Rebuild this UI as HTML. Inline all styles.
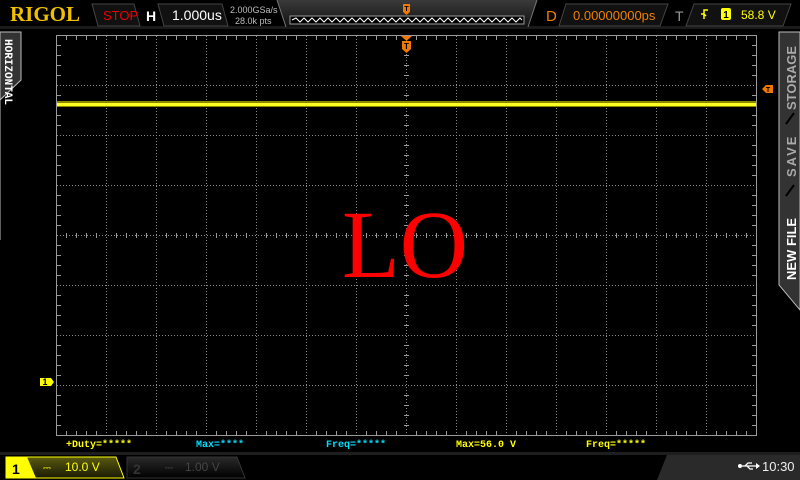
<!DOCTYPE html>
<html><head><meta charset="utf-8"><style>
body{margin:0;width:800px;height:480px;background:#000;overflow:hidden;font-family:"Liberation Sans",sans-serif}
svg{position:absolute;left:0;top:0}
</style></head><body>
<svg width="800" height="480" viewBox="0 0 800 480" xmlns="http://www.w3.org/2000/svg" font-family="Liberation Sans, sans-serif">
<defs>
<linearGradient id="tg" x1="0" y1="0" x2="0" y2="1"><stop offset="0" stop-color="#3a3a3a"/><stop offset="1" stop-color="#111"/></linearGradient>
<linearGradient id="bg" x1="0" y1="0" x2="0" y2="1"><stop offset="0" stop-color="#2a2a2a"/><stop offset="1" stop-color="#000"/></linearGradient>
<linearGradient id="c1" x1="0" y1="0" x2="0" y2="1"><stop offset="0" stop-color="#5a5a10"/><stop offset="1" stop-color="#1a1a05"/></linearGradient>
</defs>
<rect x="0" y="0" width="800" height="28" fill="#000"/>
<rect x="0" y="26" width="800" height="3" fill="#1a1a1a"/>
<text x="10" y="21" font-family="Liberation Serif, serif" font-weight="bold" font-size="21" fill="#f0c000">RIGOL</text>
<polygon points="92,4 134,4 140,26 98,26" fill="#111" stroke="#444"/>
<text x="103" y="20" font-size="13" fill="#e00">STOP</text>
<text x="146" y="21" font-size="14" font-weight="bold" fill="#fff">H</text>
<polygon points="158,4 222,4 228,26 164,26" fill="#111" stroke="#444"/>
<text x="172" y="20" font-size="14" fill="#fff">1.000us</text>
<text x="230" y="13" font-size="9" fill="#bbb">2.000GSa/s</text>
<text x="235" y="24" font-size="9" fill="#bbb">28.0k pts</text>
<polygon points="277,0 537,0 528,27 286,27" fill="url(#tg)"/>
<line x1="277" y1="0" x2="286" y2="27" stroke="#777"/>
<line x1="537" y1="0" x2="528" y2="27" stroke="#777"/>
<rect x="290" y="16" width="234" height="8" fill="#000" stroke="#999"/>
<polyline points="292,20 296,18 300,22 304,18 308,22 312,18 316,22 320,18 324,22 328,18 332,22 336,18 340,22 344,18 348,22 352,18 356,22 360,18 364,22 368,18 372,22 376,18 380,22 384,18 388,22 392,18 396,22 400,18 404,22 408,18 412,22 416,18 420,22 424,18 428,22 432,18 436,22 440,18 444,22 448,18 452,22 456,18 460,22 464,18 468,22 472,18 476,22 480,18 484,22 488,18 492,22 496,18 500,22 504,18 508,22 512,18 516,22 520,18 522,20" fill="none" stroke="#fff" stroke-width="1"/>
<rect x="403" y="4" width="7" height="8" fill="#f07800"/><polygon points="403,12 410,12 406.5,15" fill="#f07800"/>
<text x="406.5" y="11" font-size="7" font-weight="bold" text-anchor="middle" fill="#000">T</text>
<text x="546" y="21" font-size="15" fill="#f08000">D</text>
<polygon points="566,4 668,4 660,26 559,26" fill="#111" stroke="#444"/>
<text x="573" y="20" font-size="13" fill="#f08000">0.00000000ps</text>
<text x="675" y="21" font-size="14" fill="#999">T</text>
<polygon points="694,4 791,4 783,26 686,26" fill="#111" stroke="#444"/>
<path d="M708,10 h-4 v9 M704,14 h-3 M706,16 l-2,-2" stroke="#ff0" stroke-width="1.5" fill="none"/>
<rect x="721" y="8" width="10" height="12" rx="2" fill="#ff0"/>
<text x="726" y="18" font-size="10" font-weight="bold" text-anchor="middle" fill="#000">1</text>
<text x="741" y="19" font-size="12" fill="#ff0">58.8 V</text>

<polygon points="0,32 21,32 21,80 0,100" fill="#333" stroke="#bbb"/>
<line x1="0" y1="100" x2="0" y2="240" stroke="#bbb"/>
<text transform="translate(5,39) rotate(90)" font-size="11" font-weight="bold" fill="#fff" font-family="Liberation Mono, monospace">HORIZONTAL</text>
<polygon points="779,32 800,32 800,310 779,285" fill="#333" stroke="#bbb"/>
<text transform="translate(796,280) rotate(-90)" font-size="13" font-weight="bold" fill="#fff">NEW FILE</text>
<line x1="786" y1="196" x2="794" y2="185" stroke="#000" stroke-width="2"/>
<text transform="translate(796,177) rotate(-90)" font-size="13" font-weight="bold" fill="#aaa" letter-spacing="2">SAVE</text>
<line x1="786" y1="124" x2="794" y2="113" stroke="#000" stroke-width="2"/>
<text transform="translate(796,110) rotate(-90)" font-size="13" font-weight="bold" fill="#aaa">STORAGE</text>

<g stroke="#8a8a8a" stroke-width="1" stroke-dasharray="1,2">
<path d="M106.5,36V435M156.5,36V435M206.5,36V435M256.5,36V435M306.5,36V435M356.5,36V435M456.5,36V435M506.5,36V435M556.5,36V435M606.5,36V435M656.5,36V435M706.5,36V435"/>
<path d="M57,85.5H756M57,135.5H756M57,185.5H756M57,285.5H756M57,335.5H756M57,385.5H756"/>
<path d="M57,235.5H756M406.5,36V435"/>
</g>
<rect x="56.5" y="35.5" width="700" height="400" fill="none" stroke="#999"/>
<g stroke="#999">
<path d="M66.5,36v4M76.5,36v4M86.5,36v4M96.5,36v4M116.5,36v4M126.5,36v4M136.5,36v4M146.5,36v4M166.5,36v4M176.5,36v4M186.5,36v4M196.5,36v4M216.5,36v4M226.5,36v4M236.5,36v4M246.5,36v4M266.5,36v4M276.5,36v4M286.5,36v4M296.5,36v4M316.5,36v4M326.5,36v4M336.5,36v4M346.5,36v4M366.5,36v4M376.5,36v4M386.5,36v4M396.5,36v4M416.5,36v4M426.5,36v4M436.5,36v4M446.5,36v4M466.5,36v4M476.5,36v4M486.5,36v4M496.5,36v4M516.5,36v4M526.5,36v4M536.5,36v4M546.5,36v4M566.5,36v4M576.5,36v4M586.5,36v4M596.5,36v4M616.5,36v4M626.5,36v4M636.5,36v4M646.5,36v4M666.5,36v4M676.5,36v4M686.5,36v4M696.5,36v4M716.5,36v4M726.5,36v4M736.5,36v4M746.5,36v4"/>
<path d="M66.5,435v-4M76.5,435v-4M86.5,435v-4M96.5,435v-4M116.5,435v-4M126.5,435v-4M136.5,435v-4M146.5,435v-4M166.5,435v-4M176.5,435v-4M186.5,435v-4M196.5,435v-4M216.5,435v-4M226.5,435v-4M236.5,435v-4M246.5,435v-4M266.5,435v-4M276.5,435v-4M286.5,435v-4M296.5,435v-4M316.5,435v-4M326.5,435v-4M336.5,435v-4M346.5,435v-4M366.5,435v-4M376.5,435v-4M386.5,435v-4M396.5,435v-4M416.5,435v-4M426.5,435v-4M436.5,435v-4M446.5,435v-4M466.5,435v-4M476.5,435v-4M486.5,435v-4M496.5,435v-4M516.5,435v-4M526.5,435v-4M536.5,435v-4M546.5,435v-4M566.5,435v-4M576.5,435v-4M586.5,435v-4M596.5,435v-4M616.5,435v-4M626.5,435v-4M636.5,435v-4M646.5,435v-4M666.5,435v-4M676.5,435v-4M686.5,435v-4M696.5,435v-4M716.5,435v-4M726.5,435v-4M736.5,435v-4M746.5,435v-4"/>
<path d="M57,45.5h4M57,55.5h4M57,65.5h4M57,75.5h4M57,95.5h4M57,105.5h4M57,115.5h4M57,125.5h4M57,145.5h4M57,155.5h4M57,165.5h4M57,175.5h4M57,195.5h4M57,205.5h4M57,215.5h4M57,225.5h4M57,245.5h4M57,255.5h4M57,265.5h4M57,275.5h4M57,295.5h4M57,305.5h4M57,315.5h4M57,325.5h4M57,345.5h4M57,355.5h4M57,365.5h4M57,375.5h4M57,395.5h4M57,405.5h4M57,415.5h4M57,425.5h4"/>
<path d="M756,45.5h-4M756,55.5h-4M756,65.5h-4M756,75.5h-4M756,95.5h-4M756,105.5h-4M756,115.5h-4M756,125.5h-4M756,145.5h-4M756,155.5h-4M756,165.5h-4M756,175.5h-4M756,195.5h-4M756,205.5h-4M756,215.5h-4M756,225.5h-4M756,245.5h-4M756,255.5h-4M756,265.5h-4M756,275.5h-4M756,295.5h-4M756,305.5h-4M756,315.5h-4M756,325.5h-4M756,345.5h-4M756,355.5h-4M756,365.5h-4M756,375.5h-4M756,395.5h-4M756,405.5h-4M756,415.5h-4M756,425.5h-4"/>
<path d="M404,45.5h5M404,55.5h5M404,65.5h5M404,75.5h5M404,95.5h5M404,105.5h5M404,115.5h5M404,125.5h5M404,145.5h5M404,155.5h5M404,165.5h5M404,175.5h5M404,195.5h5M404,205.5h5M404,215.5h5M404,225.5h5M404,245.5h5M404,255.5h5M404,265.5h5M404,275.5h5M404,295.5h5M404,305.5h5M404,315.5h5M404,325.5h5M404,345.5h5M404,355.5h5M404,365.5h5M404,375.5h5M404,395.5h5M404,405.5h5M404,415.5h5M404,425.5h5"/>
<path d="M66.5,233v5M76.5,233v5M86.5,233v5M96.5,233v5M116.5,233v5M126.5,233v5M136.5,233v5M146.5,233v5M166.5,233v5M176.5,233v5M186.5,233v5M196.5,233v5M216.5,233v5M226.5,233v5M236.5,233v5M246.5,233v5M266.5,233v5M276.5,233v5M286.5,233v5M296.5,233v5M316.5,233v5M326.5,233v5M336.5,233v5M346.5,233v5M366.5,233v5M376.5,233v5M386.5,233v5M396.5,233v5M416.5,233v5M426.5,233v5M436.5,233v5M446.5,233v5M466.5,233v5M476.5,233v5M486.5,233v5M496.5,233v5M516.5,233v5M526.5,233v5M536.5,233v5M546.5,233v5M566.5,233v5M576.5,233v5M586.5,233v5M596.5,233v5M616.5,233v5M626.5,233v5M636.5,233v5M646.5,233v5M666.5,233v5M676.5,233v5M686.5,233v5M696.5,233v5M716.5,233v5M726.5,233v5M736.5,233v5M746.5,233v5"/>
</g>
<polygon points="401,36 412,36 406.5,41" fill="#f07800"/>
<rect x="402" y="41" width="9" height="8" fill="#f07800"/><polygon points="402,49 411,49 406.5,53" fill="#f07800"/>
<text x="406.5" y="49" font-size="8" font-weight="bold" text-anchor="middle" fill="#000">T</text>
<polygon points="762,89 766,85 773,85 773,93 766,93" fill="#f07800"/>
<text x="768" y="92" font-size="7" font-weight="bold" text-anchor="middle" fill="#000">T</text>
<rect x="57" y="101" width="699" height="2" fill="#888800"/>
<rect x="57" y="103" width="699" height="3" fill="#ffff20"/>
<rect x="57" y="106" width="699" height="1" fill="#888800"/>
<polygon points="40,378 51,378 54,382 51,386 40,386" fill="#ffff00"/>
<text x="45" y="385" font-size="9" font-weight="bold" text-anchor="middle" fill="#000">1</text>
<text x="342" y="277" font-family="Liberation Serif, serif" font-size="96" textLength="126" lengthAdjust="spacingAndGlyphs" fill="#ff0000">LO</text>
<g font-family="Liberation Mono, monospace" font-size="10" font-weight="bold">
<text x="66" y="447" fill="#ffff00">+Duty=*****</text>
<text x="196" y="447" fill="#00e0ff">Max=****</text>
<text x="326" y="447" fill="#00e0ff">Freq=*****</text>
<text x="456" y="447" fill="#ffff00">Max=56.0 V</text>
<text x="586" y="447" fill="#ffff00">Freq=*****</text>
</g>
<rect x="0" y="452" width="800" height="28" fill="#000"/>
<rect x="0" y="452" width="800" height="3" fill="#1e1e1e"/>
<polygon points="667,455 800,455 800,480 657,480" fill="#2a2a2a"/>
<polygon points="6,457 116,457 124,478 6,478" fill="url(#c1)" stroke="#ffff00"/>
<polygon points="6,457 27,457 36,478 6,478" fill="#ffff00"/>
<text x="12" y="474" font-size="14" font-weight="bold" fill="#000">1</text>
<text x="43" y="471" font-size="10" fill="#ff0">⎓</text>
<text x="65" y="471" font-size="12" fill="#ff0">10.0 V</text>
<polygon points="127,457 237,457 245,478 127,478" fill="url(#bg)" stroke="#333"/>
<text x="133" y="474" font-size="14" font-weight="bold" fill="#333">2</text>
<text x="165" y="471" font-size="10" fill="#444">⎓</text>
<text x="185" y="471" font-size="12" fill="#444">1.00 V</text>
<g stroke="#fff" fill="#fff">
<circle cx="740" cy="466" r="2" stroke="none"/>
<path d="M740,466h16M745,466l3,-3h4M747,466l3,3h3" fill="none" stroke-width="1.3"/>
<polygon points="756,463 760,466 756,469" stroke="none"/>
</g>
<text x="762" y="471" font-size="13" fill="#eee">10:30</text>
</svg>
</body></html>
